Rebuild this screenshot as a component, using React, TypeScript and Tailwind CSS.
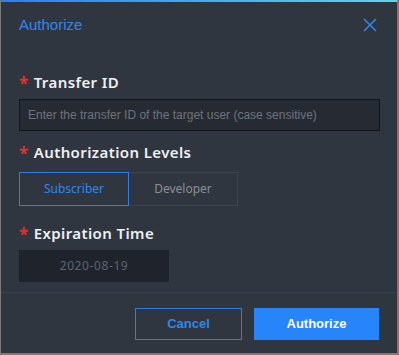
import React, { useState } from 'react';

function Label({ children }: { children: React.ReactNode }) {
  return (
    <div className="flex items-center gap-[5px] h-[20px] font-['Noto_Sans',sans-serif] text-[15px] font-semibold tracking-[0.4px] text-[#eef0f3]">
      <span className="text-[#e5322d] text-[17px] leading-none mt-[3px]">*</span>
      <span>{children}</span>
    </div>
  );
}

export default function App() {
  const [level, setLevel] = useState<'sub' | 'dev'>('sub');

  return (
    <div className="w-[399px] h-[355px] bg-[#7a7a7a] pl-px pr-[2px] pb-[2px]">
      <div className="h-full bg-[#30363f] flex flex-col">
        <div className="h-[2px] bg-gradient-to-r from-[#2f7ef0] to-[#63d3ea]" />
        <div className="flex items-center justify-between pl-[18px] pr-[20px] h-[45px] pt-[1px]">
          <h2 className="font-['Liberation_Sans',Arial,sans-serif] text-[15px] text-[#2f86ef]">Authorize</h2>
          <button aria-label="Close" className="text-[#2f86ef]">
            <svg width="14" height="14" viewBox="0 0 14 14" fill="none" stroke="currentColor" strokeWidth="1.6">
              <path d="M1 1l12 12M13 1L1 13" />
            </svg>
          </button>
        </div>

        <div className="px-[18px] pt-[25px] flex flex-col">
          <Label>Transfer ID</Label>
          <input
            className="mt-[7px] h-[32px] w-[361px] bg-[#262b33] border border-[#121418] px-[8px] text-[12px] font-['Liberation_Sans',Arial,sans-serif] text-[#c8ccd2] placeholder:text-[#6e737b] outline-none"
            placeholder="Enter the transfer ID of the target user (case sensitive)"
          />

          <div className="mt-[11px]">
            <Label>Authorization Levels</Label>
          </div>
          <div className="mt-[10px] flex">
            <button
              onClick={() => setLevel('sub')}
              className={`w-[110px] h-[34px] text-[12px] font-['Noto_Sans',sans-serif] border ${level === 'sub' ? 'border-[#2f7fe8] text-[#2f86ef]' : 'border-[#3d4350] text-[#8a9099]'}`}
            >
              Subscriber
            </button>
            <button
              onClick={() => setLevel('dev')}
              className={`w-[109px] h-[34px] text-[12px] font-['Noto_Sans',sans-serif] border border-l-0 ${level === 'dev' ? 'border-[#2f7fe8] text-[#2f86ef]' : 'border-[#3d4350] text-[#8a9099]'}`}
            >
              Developer
            </button>
          </div>

          <div className="mt-[17px]">
            <Label>Expiration Time</Label>
          </div>
          <div className="mt-[7px] w-[150px] h-[32px] bg-[#1f242c] flex items-center justify-center text-[12px] tracking-[0.6px] font-['Noto_Sans',sans-serif] text-[#5e646e]">
            2020-08-19
          </div>
        </div>

        <div className="mt-[10px] border-t border-[#3b4152]" />

        <div className="flex justify-end gap-[12px] pr-[18px] pt-[15px]">
          <button className="w-[107px] h-[32px] border border-[#2f7fe8] text-[#2f86ef] text-[13px] font-bold font-['Liberation_Sans',Arial,sans-serif]">
            Cancel
          </button>
          <button className="w-[125px] h-[32px] bg-[#2884fb] text-white text-[13px] font-bold font-['Liberation_Sans',Arial,sans-serif]">
            Authorize
          </button>
        </div>
      </div>
    </div>
  );
}
